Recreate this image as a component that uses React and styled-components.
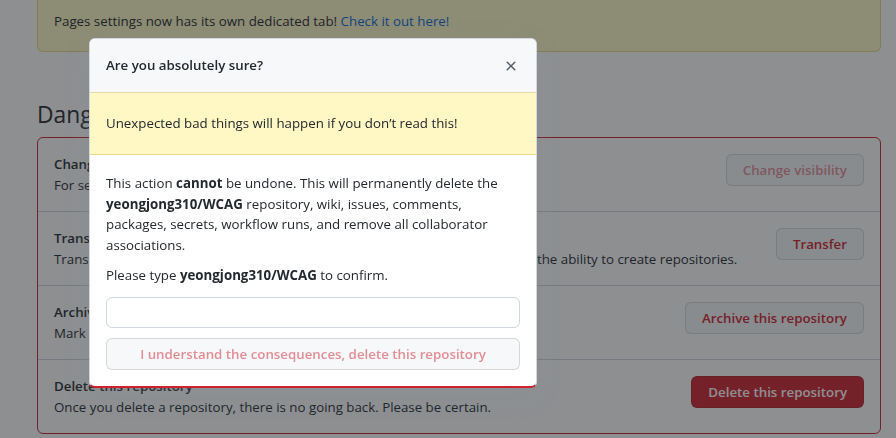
import React from "react";
import styled, { createGlobalStyle } from "styled-components";

const GlobalStyle = createGlobalStyle`
  html, body {
    margin: 0;
    padding: 0;
    background: #ffffff;
    overflow: hidden;
  }
  body {
    font-family: "Open Sans", "Noto Sans", sans-serif;
    font-size: 13.3px;
    line-height: 1.5;
    color: #24292f;
  }
  * {
    box-sizing: border-box;
  }
`;

const Page = styled.div`
  width: 896px;
  height: 438px;
  padding-left: 37px;
`;

const Column = styled.div`
  width: 844px;
`;

const Banner = styled.div`
  background: #fff8c5;
  border: 1px solid rgba(212, 167, 44, 0.4);
  border-top: none;
  border-radius: 0 0 6px 6px;
  padding: 11px 16px 20px;
  line-height: 20px;
`;

const Link = styled.a`
  color: #0969da;
  text-decoration: none;
`;

const Heading = styled.h2`
  margin: 44px 0 3px;
  font-size: 22.8px;
  font-weight: 400;
  line-height: 38px;
`;

const DangerBox = styled.div`
  border: 1px solid #cf222e;
  border-radius: 6px;
`;

const Row = styled.div`
  display: flex;
  align-items: flex-start;
  justify-content: space-between;
  padding: 16px 16px 15px;
  border-top: ${(p) => (p.first ? "none" : "1px solid #d0d7de")};
`;

const RowText = styled.div`
  line-height: 21px;
`;

const RowTitle = styled.div`
  font-weight: 600;
`;

const ActionButton = styled.button`
  flex-shrink: 0;
  height: 32px;
  padding: 0 16px;
  border-radius: 6px;
  font-family: inherit;
  font-size: 13.3px;
  font-weight: 600;
  border: 1px solid rgba(27, 31, 36, 0.15);
  background: ${(p) => (p.primary ? "#cf222e" : "#f6f8fa")};
  color: ${(p) =>
    p.primary ? "#ffffff" : p.disabled ? "rgba(207,34,46,0.5)" : "#cf222e"};
`;

const Overlay = styled.div`
  position: fixed;
  inset: 0;
  background: rgba(27, 31, 36, 0.5);
`;

const Modal = styled.div`
  position: fixed;
  left: 89px;
  top: 38px;
  width: 448px;
  background: #ffffff;
  border: 1px solid #d0d7de;
  border-bottom: 2px solid #cf222e;
  border-radius: 6px;
  overflow: hidden;
  box-shadow: 0 8px 24px rgba(140, 149, 159, 0.2);
`;

const ModalHeader = styled.div`
  display: flex;
  align-items: center;
  justify-content: space-between;
  padding: 16px;
  background: #f6f8fa;
  border-bottom: 1px solid rgba(212, 167, 44, 0.4);
  line-height: 21px;
`;

const ModalTitle = styled.h3`
  margin: 0;
  font-size: 13.3px;
  font-weight: 600;
`;

const CloseButton = styled.button`
  display: flex;
  padding: 0;
  border: none;
  background: none;
  color: #57606a;
  margin-right: 1px;
`;

const Flash = styled.div`
  padding: 20px 16px;
  background: #fff8c5;
  border-bottom: 1px solid rgba(212, 167, 44, 0.4);
  line-height: 21px;
`;

const ModalBody = styled.div`
  padding: 18px 16px 16px;
`;

const Para = styled.p`
  margin: 0 0 ${(p) => p.gap || 10}px;
  line-height: 20.5px;
`;

const Input = styled.input`
  display: block;
  width: 100%;
  height: 31px;
  margin-top: 11px;
  border: 1px solid #d0d7de;
  border-radius: 6px;
  background: #ffffff;
  font-family: inherit;
  font-size: 13.3px;
`;

const ConfirmButton = styled.button`
  display: block;
  width: 100%;
  height: 32px;
  margin-top: 10px;
  border: 1px solid rgba(27, 31, 36, 0.15);
  border-radius: 6px;
  background: #f6f8fa;
  color: rgba(207, 34, 46, 0.5);
  font-family: inherit;
  font-size: 13.3px;
  font-weight: 600;
`;

const rows = [
  {
    title: "Change repository visibility",
    text: "For security reasons, you cannot change the visibility of a fork.",
    action: "Change visibility",
    disabled: true,
  },
  {
    title: "Transfer ownership",
    text: "Transfer this repository to another user or to an organization where you have the ability to create repositories.",
    action: "Transfer",
  },
  {
    title: "Archive this repository",
    text: "Mark this repository as archived and read-only.",
    action: "Archive this repository",
  },
  {
    title: "Delete this repository",
    text: "Once you delete a repository, there is no going back. Please be certain.",
    action: "Delete this repository",
    primary: true,
  },
];

const XIcon = () => (
  <svg width="16" height="16" viewBox="0 0 16 16" fill="currentColor">
    <path d="M3.72 3.72a.75.75 0 011.06 0L8 6.94l3.22-3.22a.75.75 0 111.06 1.06L9.06 8l3.22 3.22a.75.75 0 11-1.06 1.06L8 9.06l-3.22 3.22a.75.75 0 01-1.06-1.06L6.94 8 3.72 4.78a.75.75 0 010-1.06z" />
  </svg>
);

export default function App() {
  return (
    <>
      <GlobalStyle />
      <Page>
        <Column>
          <Banner>
            Pages settings now has its own dedicated tab!{" "}
            <Link href="#">Check it out here!</Link>
          </Banner>
          <Heading>Danger Zone</Heading>
          <DangerBox>
            {rows.map((r, i) => (
              <Row key={r.title} first={i === 0}>
                <RowText>
                  <RowTitle>{r.title}</RowTitle>
                  <div>{r.text}</div>
                </RowText>
                <ActionButton disabled={r.disabled} primary={r.primary}>
                  {r.action}
                </ActionButton>
              </Row>
            ))}
          </DangerBox>
        </Column>
      </Page>
      <Overlay />
      <Modal>
        <ModalHeader>
          <ModalTitle>Are you absolutely sure?</ModalTitle>
          <CloseButton aria-label="Close">
            <XIcon />
          </CloseButton>
        </ModalHeader>
        <Flash>Unexpected bad things will happen if you don’t read this!</Flash>
        <ModalBody>
          <Para>
            This action <strong>cannot</strong> be undone. This will
            permanently delete the <strong>yeongjong310/WCAG</strong>{" "}
            repository, wiki, issues, comments, packages, secrets, workflow
            runs, and remove all collaborator associations.
          </Para>
          <Para gap={0}>
            Please type <strong>yeongjong310/WCAG</strong> to confirm.
          </Para>
          <Input type="text" />
          <ConfirmButton disabled>
            I understand the consequences, delete this repository
          </ConfirmButton>
        </ModalBody>
      </Modal>
    </>
  );
}
